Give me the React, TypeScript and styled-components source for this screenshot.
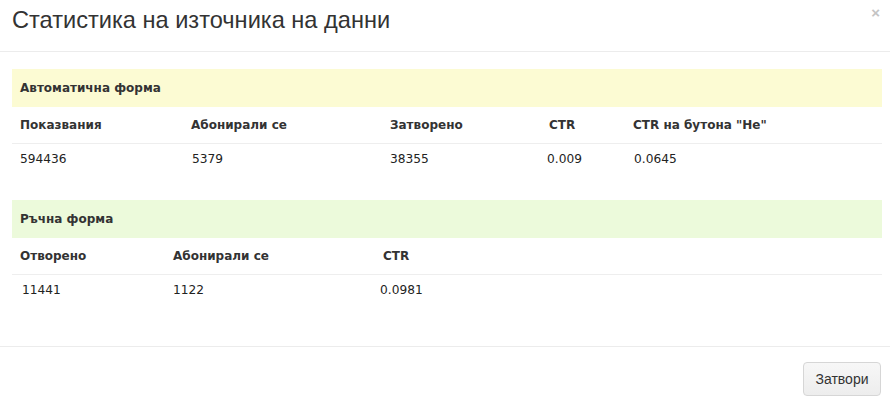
import styled, { createGlobalStyle } from 'styled-components'

const GlobalStyle = createGlobalStyle`
  html, body {
    margin: 0;
    padding: 0;
    background: #fff;
  }
`

const Modal = styled.div`
  width: 890px;
  height: 403px;
  background: #fff;
  display: flex;
  flex-direction: column;
  font-family: 'DejaVu Sans', Verdana, sans-serif;
  color: #333;
`

const Header = styled.div`
  position: relative;
  height: 52px;
  box-sizing: border-box;
  padding: 5px 12px 0;
  border-bottom: 1px solid #ececec;
`

const Title = styled.h4`
  margin: 0;
  font-family: 'Liberation Sans', Arial, sans-serif;
  font-weight: normal;
  font-size: 23.6px;
  line-height: 30px;
  color: #333;
`

const Close = styled.button`
  position: absolute;
  top: 3px;
  right: 10px;
  padding: 0;
  border: 0;
  background: none;
  font-family: 'Liberation Sans', Arial, sans-serif;
  font-size: 15px;
  font-weight: bold;
  line-height: 20px;
  color: #c4c4c4;
  cursor: pointer;
`

const Body = styled.div`
  flex: 1;
  padding: 17px 8px 0 12px;
`

const Section = styled.section`
  margin-bottom: 19px;
`

const Band = styled.div<{ $tone: 'warning' | 'success' }>`
  height: 38px;
  display: flex;
  align-items: center;
  padding-left: 8px;
  background: ${(p) => (p.$tone === 'warning' ? '#fcfbd3' : '#ecfadb')};
  font-size: 12px;
  font-weight: bold;
  color: #333;
`

const Row = styled.div<{ $cols: string; $head?: boolean }>`
  display: grid;
  grid-template-columns: ${(p) => p.$cols};
  height: 37px;
  box-sizing: border-box;
  align-items: center;
  padding-left: 8px;
  padding-bottom: ${(p) => (p.$head ? 0 : 7)}px;
  border-bottom: ${(p) => (p.$head ? '1px solid #eee' : '0')};
  font-size: ${(p) => (p.$head ? '12px' : '12.2px')};
  font-weight: ${(p) => (p.$head ? 'bold' : 'normal')};
  color: ${(p) => (p.$head ? '#333' : '#222')};
`

const Cell = styled.div<{ $shift?: number }>`
  white-space: nowrap;
  margin-left: ${(p) => p.$shift ?? 0}px;
`

const Footer = styled.div`
  height: 57px;
  border-top: 1px solid #ececec;
  display: flex;
  justify-content: flex-end;
  align-items: flex-start;
  padding: 15px 9px 0 0;
  box-sizing: border-box;
`

const Button = styled.button`
  width: 78px;
  height: 34px;
  border: 1px solid #d6d6d6;
  border-radius: 4px;
  background: linear-gradient(#f7f7f7, #ededed);
  font-family: 'Liberation Sans', Arial, sans-serif;
  font-size: 14px;
  color: #333;
  cursor: pointer;
`

type Table = {
  title: string
  tone: 'warning' | 'success'
  cols: string
  heads: string[]
  values: string[]
  shifts?: number[]
}

const tables: Table[] = [
  {
    title: 'Автоматична форма',
    tone: 'warning',
    cols: '171px 199px 159px 84px 1fr',
    heads: ['Показвания', 'Абонирали се', 'Затворено', 'CTR', 'CTR на бутона "Не"'],
    values: ['594436', '5379', '38355', '0.009', '0.0645'],
    shifts: [0, 1, 0, -2, 1],
  },
  {
    title: 'Ръчна форма',
    tone: 'success',
    cols: '153px 210px 1fr',
    heads: ['Отворено', 'Абонирали се', 'CTR'],
    values: ['11441', '1122', '0.0981'],
    shifts: [2, 0, -3],
  },
]

export default function App() {
  return (
    <>
      <GlobalStyle />
      <Modal>
        <Header>
          <Title>Статистика на източника на данни</Title>
          <Close aria-label="Close">×</Close>
        </Header>
        <Body>
          {tables.map((t) => (
            <Section key={t.title}>
              <Band $tone={t.tone}>{t.title}</Band>
              <Row $cols={t.cols} $head>
                {t.heads.map((h) => (
                  <Cell key={h}>{h}</Cell>
                ))}
              </Row>
              <Row $cols={t.cols}>
                {t.values.map((v, i) => (
                  <Cell key={i} $shift={t.shifts?.[i]}>
                    {v}
                  </Cell>
                ))}
              </Row>
            </Section>
          ))}
        </Body>
        <Footer>
          <Button>Затвори</Button>
        </Footer>
      </Modal>
    </>
  )
}
